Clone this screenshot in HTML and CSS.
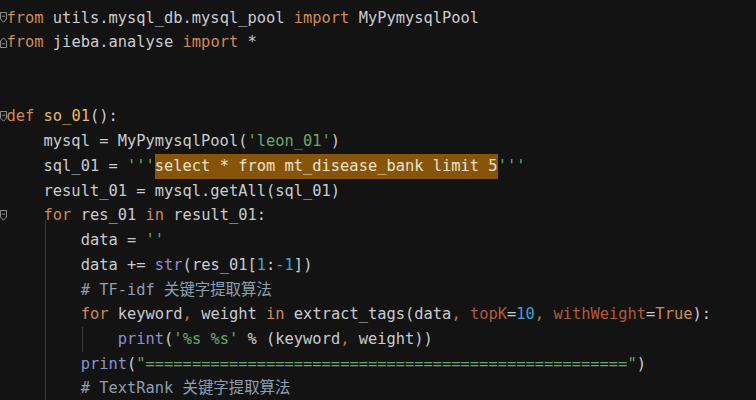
FILE: index.html
```html
<!DOCTYPE html>
<html>
<head>
<meta charset="utf-8">
<link rel="stylesheet" href="styles.css">
</head>
<body>
<div class="editor">
  <div class="ln"><span class="gut"><svg class="fold" viewBox="0 0 7 11" width="7" height="11"><path d="M0.5 0.5H6.5V7L3.5 10.2L0.5 7Z"/><path d="M2 4.2H5"/></svg></span><span class="code"><span class="k">from</span> utils.mysql_db.mysql_pool <span class="k">import</span> MyPymysqlPool</span></div>
  <div class="ln"><span class="gut"><svg class="fold" viewBox="0 0 7 11" width="7" height="11"><path d="M0.5 10.5H6.5V4L3.5 0.8L0.5 4Z"/><path d="M2 6.8H5"/></svg></span><span class="code"><span class="k">from</span> jieba.analyse <span class="k">import</span> *</span></div>
  <div class="ln"><span class="gut"></span><span class="code"> </span></div>
  <div class="ln"><span class="gut"></span><span class="code"> </span></div>
  <div class="ln"><span class="gut"><svg class="fold" viewBox="0 0 7 11" width="7" height="11"><path d="M0.5 0.5H6.5V7L3.5 10.2L0.5 7Z"/><path d="M2 4.2H5"/></svg></span><span class="code"><span class="k">def</span> <span class="f">so_01</span>():</span></div>
  <div class="ln"><span class="gut"></span><span class="code">    mysql = MyPymysqlPool(<span class="s">'leon_01'</span>)</span></div>
  <div class="ln"><span class="gut"></span><span class="code">    sql_01 = <span class="s">'''</span><span class="sel">select * from mt_disease_bank limit 5</span><span class="s">'''</span></span></div>
  <div class="ln"><span class="gut"></span><span class="code">    result_01 = mysql.getAll(sql_01)</span></div>
  <div class="ln tail"><span class="gut"><svg class="fold" viewBox="0 0 7 11" width="7" height="11"><path d="M0.5 0.5H6.5V7L3.5 10.2L0.5 7Z"/><path d="M2 4.2H5"/></svg></span><span class="code">    <span class="k">for</span> res_01 <span class="k">in</span> result_01:</span></div>
  <div class="ln"><span class="gut"></span><span class="code"><span class="ind">    </span><span class="ind g">    </span>data = <span class="s">''</span></span></div>
  <div class="ln"><span class="gut"></span><span class="code"><span class="ind">    </span><span class="ind g">    </span>data += <span class="b">str</span>(res_01[<span class="n">1</span>:<span class="n">-1</span>])</span></div>
  <div class="ln"><span class="gut"></span><span class="code"><span class="ind">    </span><span class="ind g">    </span><span class="c"># TF-idf 关键字提取算法</span></span></div>
  <div class="ln"><span class="gut"></span><span class="code"><span class="ind">    </span><span class="ind g">    </span><span class="k">for</span> keyword<span class="p">,</span> weight <span class="k">in</span> extract_tags(data<span class="p">,</span> <span class="a">topK</span>=<span class="n">10</span><span class="p">,</span> <span class="a">withWeight</span>=<span class="t">True</span>):</span></div>
  <div class="ln"><span class="gut"></span><span class="code"><span class="ind">    </span><span class="ind g">    </span><span class="ind g">    </span><span class="b">print</span>(<span class="s">'%s %s'</span> % (keyword<span class="p">,</span> weight))</span></div>
  <div class="ln"><span class="gut"></span><span class="code"><span class="ind">    </span><span class="ind g">    </span><span class="b">print</span>(<span class="s">"===================================================="</span>)</span></div>
  <div class="ln"><span class="gut"></span><span class="code"><span class="ind">    </span><span class="ind g">    </span><span class="c"># TextRank 关键字提取算法</span></span></div>
</div>
</body>
</html>
```

FILE: styles.css
```css
html, body {
  margin: 0;
  padding: 0;
  background: #131313;
}

body {
  width: 756px;
  height: 400px;
  overflow: hidden;
}

.editor {
  padding-top: 5.6px;
  font-family: "DejaVu Sans Mono", "Noto Sans CJK SC", monospace;
  font-size: 15.4px;
  line-height: 24.73px;
  color: #c9cbd0;
}

.ln {
  display: flex;
  height: 24.73px;
}

.ln.tail {
  background: linear-gradient(#383838, #383838) 44.6px 100% / 1px 8px no-repeat;
}

.gut {
  flex: none;
  width: 6.5px;
  display: flex;
  align-items: center;
}

.fold {
  flex: none;
  overflow: visible;
}

.fold path {
  fill: none;
  stroke: #8d8d8d;
  stroke-width: 1;
}

.code {
  white-space: pre;
}

.ind {
  display: inline-block;
  vertical-align: top;
}

.ind.g {
  background: linear-gradient(#383838, #383838) 1px 0 / 1px 100% no-repeat;
}

.k { color: #cf8a55; }
.t { color: #cf8a55; }
.f { color: #e6bb65; }
.s { color: #6aa870; }
.n { color: #3aa3d8; }
.b { color: #8f8fd2; }
.c { color: #8e9fb1; font-family: "DejaVu Sans Mono", "Noto Sans CJK SC", monospace; }
.p { color: #cc7832; }
.a { color: #b15a3a; }

.sel {
  display: inline-block;
  vertical-align: top;
  background: #87540c;
  color: #efe2c8;
}
```
